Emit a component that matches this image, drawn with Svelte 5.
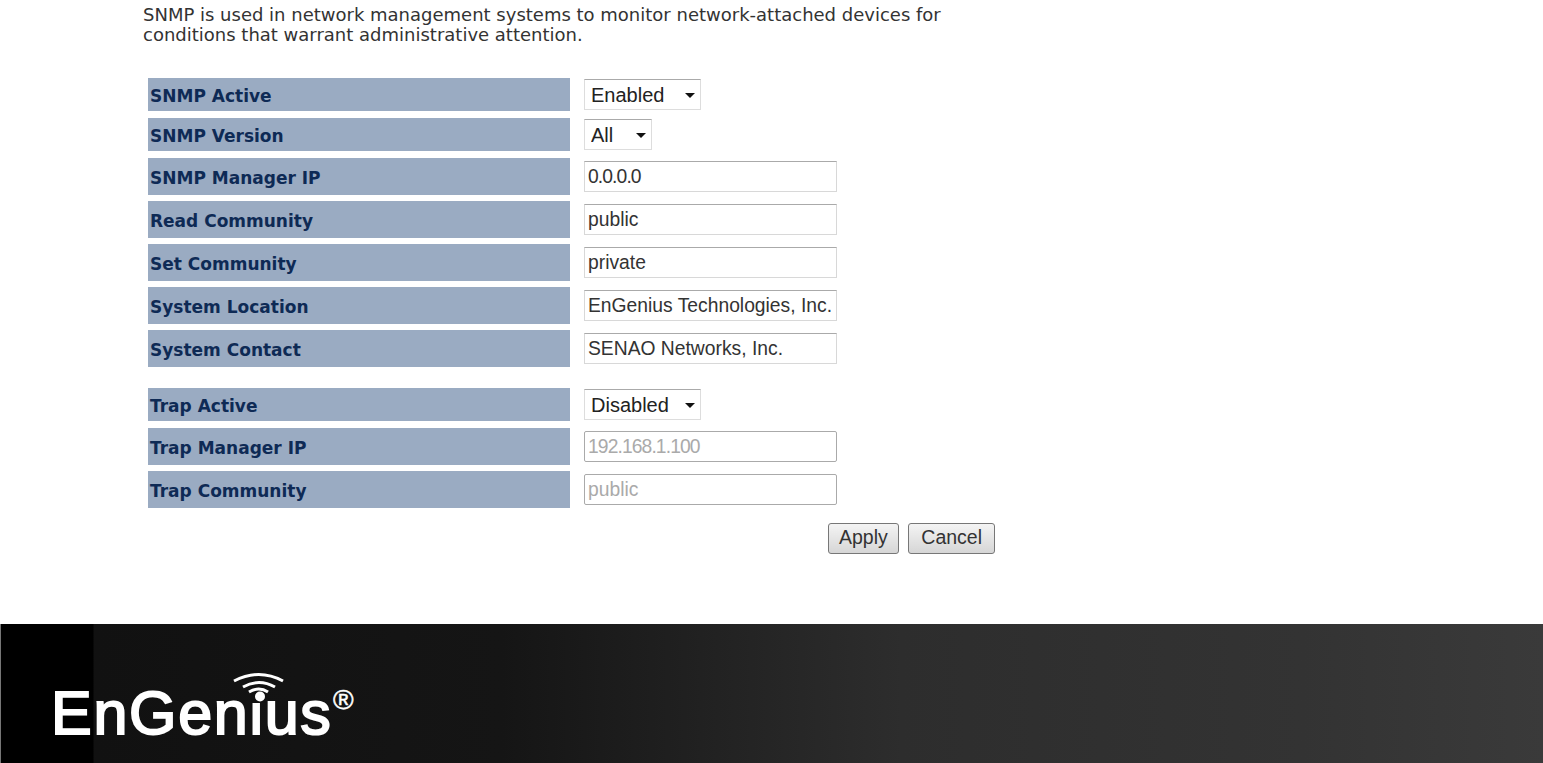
<script lang="ts">
	type Field = { label: string; kind: 'choice' | 'text'; value: string; width?: number; disabled?: boolean; tight?: boolean };

	const snmpFields: Field[] = [
		{ label: 'SNMP Active', kind: 'choice', value: 'Enabled', width: 117 },
		{ label: 'SNMP Version', kind: 'choice', value: 'All', width: 68 },
		{ label: 'SNMP Manager IP', kind: 'text', value: '0.0.0.0', tight: true },
		{ label: 'Read Community', kind: 'text', value: 'public' },
		{ label: 'Set Community', kind: 'text', value: 'private' },
		{ label: 'System Location', kind: 'text', value: 'EnGenius Technologies, Inc.' },
		{ label: 'System Contact', kind: 'text', value: 'SENAO Networks, Inc.' }
	];

	const trapFields: Field[] = [
		{ label: 'Trap Active', kind: 'choice', value: 'Disabled', width: 117 },
		{ label: 'Trap Manager IP', kind: 'text', value: '192.168.1.100', disabled: true, tight: true },
		{ label: 'Trap Community', kind: 'text', value: 'public', disabled: true }
	];
</script>

{#snippet row(field: Field)}
	<div class={['row', field.kind]}>
		<div class="label">{field.label}</div>
		<div class="control">
			{#if field.kind === 'choice'}
				<span class="select" style="width: {field.width}px">
					<select aria-label={field.label}>
						<option>{field.value}</option>
					</select>
					<i class="arrow"></i>
				</span>
			{:else}
				<input class={{ tight: field.tight }} type="text" value={field.value} disabled={field.disabled} aria-label={field.label} />
			{/if}
		</div>
	</div>
{/snippet}

<div class="page">
	<main>
		<p class="intro">
			SNMP is used in network management systems to monitor network-attached devices for<br />
			conditions that warrant administrative attention.
		</p>

		<section class="fields">
			{#each snmpFields as field}
				{@render row(field)}
			{/each}
		</section>

		<section class="fields trap">
			{#each trapFields as field}
				{@render row(field)}
			{/each}
		</section>

		<div class="actions">
			<button type="button">Apply</button>
			<button type="button" class="cancel">Cancel</button>
		</div>
	</main>

	<footer>
		<div class="logo">
			<span class="wordmark">EnGenius</span>
			<svg class="mark" width="70" height="40" viewBox="0 0 70 40" aria-hidden="true">
				<!-- hides the font's square dot, the logo has a round one -->
				<rect x="17" y="15" width="15" height="16" fill="#111" />
				<g fill="none" stroke="#fff" stroke-width="3">
					<path d="M0 9 Q25 -4 49 9" />
					<path d="M9 15 Q25 6 41 15" />
					<path d="M15 20 Q25 14 34 20" />
				</g>
				<circle cx="26" cy="24.5" r="5" fill="#fff" />
			</svg>
			<span class="reg">®</span>
		</div>
	</footer>
</div>

<style>
	:global(body) {
		margin: 0;
		background: #fff;
	}

	.page {
		height: 763px;
		display: flex;
		flex-direction: column;
		overflow: hidden;
	}

	main {
		flex: 1;
		padding: 5px 0 0 143px;
	}

	.intro {
		margin: 0 0 33px;
		font: 18px/20px 'DejaVu Sans', Verdana, sans-serif;
		color: #333;
	}

	.fields {
		width: 700px;
		margin-left: 5px;
	}

	.trap {
		margin-top: 21px;
	}

	.row {
		display: flex;
		align-items: stretch;
		height: 37px;
		margin-bottom: 6px;
	}

	.row.choice {
		height: 33px;
		margin-bottom: 7px;
	}

	.label {
		width: 422px;
		padding: 2px 2px 0;
		box-sizing: border-box;
		display: flex;
		align-items: center;
		background: #9aabc2;
		color: #0e2a55;
		font: bold 17px 'DejaVu Sans', Verdana, sans-serif;
	}

	.control {
		margin-left: 14px;
		display: flex;
		align-items: center;
	}

	input {
		width: 253px;
		height: 31px;
		padding: 1px 3px 0;
		box-sizing: border-box;
		border: 1px solid #d8d8d8;
		border-top-color: #aaa;
		background: #fff;
		color: #333;
		font: 19.3px 'Liberation Sans', Arial, sans-serif;
	}

	input.tight {
		letter-spacing: -0.9px;
	}

	input:disabled {
		border-color: #aaa;
		border-radius: 2px;
		color: #aaa;
	}

	.select {
		position: relative;
		display: inline-block;
		height: 31px;
	}

	select {
		appearance: none;
		width: 100%;
		height: 100%;
		padding: 0 0 0 6px;
		border: 1px solid #ddd;
		border-top-color: #aaa;
		border-radius: 0;
		background: #fff;
		color: #222;
		font: 20px 'Liberation Sans', Arial, sans-serif;
	}

	.arrow {
		position: absolute;
		top: 14px;
		right: 6px;
		border: 5px solid transparent;
		border-top-color: #111;
		border-bottom-width: 0;
		pointer-events: none;
	}

	.actions {
		width: 852px;
		margin-top: 15px;
		display: flex;
		justify-content: flex-end;
		gap: 9px;
	}

	button {
		height: 31px;
		padding: 0 10.5px 2px;
		border: 1px solid #777;
		border-radius: 3px;
		background: linear-gradient(#f4f4f4, #d6d6d6);
		color: #333;
		font: 19.5px 'Liberation Sans', Arial, sans-serif;
	}

	.cancel {
		padding: 0 12px 2px;
	}

	footer {
		height: 139px;
		flex: none;
		box-sizing: border-box;
		padding-left: 50px;
		border-left: 1px solid #777;
		background: linear-gradient(90deg, #000 0, #000 92px, #111 93px, #151515 500px, #2d2d2d 900px, #333 1300px, #3a3a3a 1543px);
	}

	.logo {
		position: relative;
		display: inline-block;
		margin-top: 54px;
		color: #fff;
	}

	.wordmark {
		font: 61px/70px 'Liberation Sans', Arial, sans-serif;
		letter-spacing: 1.7px;
		-webkit-text-stroke: 2px #fff;
	}

	.mark {
		position: absolute;
		left: 183px;
		top: -6px;
		overflow: visible;
	}

	.reg {
		position: absolute;
		left: 282px;
		top: 8px;
		font: 28px/28px 'Liberation Sans', Arial, sans-serif;
		-webkit-text-stroke: 0.5px #fff;
	}
</style>
